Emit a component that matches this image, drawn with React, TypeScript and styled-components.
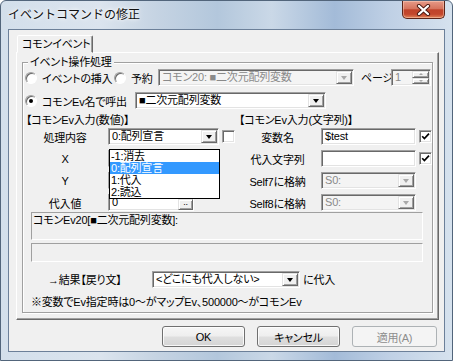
import React from "react"
import styled, { createGlobalStyle, css } from "styled-components"

const GlobalStyle = createGlobalStyle`
  html, body {
    margin: 0;
    padding: 0;
    background: #fff;
  }
  body {
    font-family: "Liberation Sans", "Noto Sans CJK JP", sans-serif;
    font-size: 11px;
    letter-spacing: -0.2px;
    font-feature-settings: "palt";
    color: #000;
  }
  * {
    box-sizing: border-box;
  }
`

const sunken = css`
  border: 1px solid;
  border-color: #a0a0a0 #fff #fff #a0a0a0;
  box-shadow: inset 1px 1px 0 #696969, inset -1px -1px 0 #e3e3e3;
`

const raised = css`
  border: 1px solid;
  border-color: #e3e3e3 #696969 #696969 #e3e3e3;
  box-shadow: inset 1px 1px 0 #fff, inset -1px -1px 0 #a0a0a0;
`

const Window = styled.div`
  width: 453px;
  height: 361px;
  display: flex;
  flex-direction: column;
  border: 1px solid #52657b;
  border-radius: 6px 6px 0 0;
  overflow: hidden;
  background: linear-gradient(90deg, #d3dfeb 0%, #dbe4ee 22%, #c6d4e3 34%, #b3c7dc 48%, #cad8e7 60%, #a3bbd8 74%, #bfd0e5 86%, #d6e2ee 100%);
`

const TitleBar = styled.div`
  flex: 0 0 28px;
  display: flex;
  align-items: flex-start;
`

const Title = styled.div`
  padding-left: 7px;
  line-height: 26px;
  font-family: "Noto Sans CJK JP", sans-serif;
  font-feature-settings: normal;
  letter-spacing: 0;
  font-size: 12px;
  color: #101010;
  text-shadow: 0 0 6px #fff, 0 0 3px #fff;
`

const CloseButton = styled.div`
  margin-left: auto;
  margin-right: 7px;
  width: 43px;
  height: 18px;
  border: 1px solid #5b2419;
  border-top: none;
  border-radius: 0 0 5px 5px;
  background: linear-gradient(#e69a88 0%, #d6745e 45%, #c0432a 52%, #c3472d 78%, #e2845a 100%);
  box-shadow: inset 0 0 0 1px rgba(255, 220, 200, 0.45);
  display: flex;
  align-items: center;
  justify-content: center;
`

const Client = styled.div`
  flex: 0 0 323px;
  margin: 0 7px;
  background: #f0f0f0;
  border: 1px solid #6c8099;
  display: flex;
  flex-direction: column;
  padding: 5px 5px 0 7px;
`

const TabStrip = styled.div`
  height: 17px;
  display: flex;
  padding-left: 1px;
`

const Tab = styled.div`
  position: relative;
  z-index: 1;
  width: 76px;
  height: 18px;
  background: #f0f0f0;
  border: 1px solid;
  border-color: #fff #696969 transparent #fff;
  box-shadow: inset -1px 0 0 #a0a0a0;
  border-radius: 2px 2px 0 0;
  padding-left: 4px;
  line-height: 16px;
  white-space: nowrap;
`

const TabPanel = styled.div`
  height: 268px;
  display: flex;
  flex-direction: column;
  border: 1px solid;
  border-color: #fff #696969 #696969 #fff;
  box-shadow: inset -1px -1px 0 #a0a0a0;
  padding: 9px 5px 6px 5px;
`

const Group = styled.div`
  flex: 1;
  position: relative;
  padding: 6px 4px 0 1px;
  border: 1px solid #a0a0a0;
  box-shadow: 1px 1px 0 #fff, inset 1px 1px 0 #fff;
  display: flex;
  flex-direction: column;
`

const GroupLabel = styled.div`
  position: absolute;
  top: -7px;
  left: 5px;
  padding: 0 2px;
  line-height: 13px;
  background: #f0f0f0;
  white-space: nowrap;
`

const Row = styled.div<{ $top: number }>`
  height: 17px;
  margin-top: ${p => p.$top}px;
  display: flex;
  align-items: center;
  white-space: nowrap;
`

const Option = styled.label<{ $w: number }>`
  flex: none;
  width: ${p => p.$w}px;
  display: flex;
  align-items: center;
  gap: 5px;
  padding-left: 1px;
`

const Radio = styled.span<{ $checked?: boolean }>`
  flex: none;
  position: relative;
  width: 12px;
  height: 12px;
  border-radius: 50%;
  background: #fff;
  border: 1px solid;
  border-color: #a0a0a0 #fff #fff #a0a0a0;
  box-shadow: inset 1px 1px 0 #696969;
  ${p =>
    p.$checked &&
    css`
      &::after {
        content: "";
        position: absolute;
        left: 3px;
        top: 3px;
        width: 4px;
        height: 4px;
        border-radius: 50%;
        background: #000;
      }
    `}
`

const Combo = styled.div<{ $w: number; $disabled?: boolean }>`
  flex: none;
  position: relative;
  width: ${p => p.$w}px;
  height: 17px;
  display: flex;
  padding: 1px;
  ${sunken};
  background: ${p => (p.$disabled ? "#f4f4f4" : "#fff")};
  color: ${p => (p.$disabled ? "#8a8a8a" : "#000")};
`

const ComboText = styled.div`
  flex: 1;
  min-width: 0;
  padding-left: 2px;
  line-height: 13px;
  overflow: hidden;
  white-space: nowrap;
`

const DropButton = styled.div<{ $disabled?: boolean }>`
  flex: none;
  width: 16px;
  height: 13px;
  background: #f0f0f0;
  ${raised};
  display: flex;
  align-items: center;
  justify-content: center;
  &::after {
    content: "";
    border-left: 3.5px solid transparent;
    border-right: 3.5px solid transparent;
    border-top: 4px solid ${p => (p.$disabled ? "#a8a8a8" : "#000")};
  }
`

const Caption = styled.span<{ $w?: number; $pad?: number }>`
  flex: none;
  width: ${p => (p.$w ? `${p.$w}px` : "auto")};
  padding-left: ${p => p.$pad ?? 0}px;
  line-height: 14px;
`

const Spinner = styled.div`
  flex: none;
  width: 40px;
  height: 17px;
  display: flex;
  padding: 1px;
  ${sunken};
  background: #f4f4f4;
  color: #8a8a8a;
`

const SpinButtons = styled.div`
  flex: none;
  width: 17px;
  display: flex;
  flex-direction: column;
`

const SpinButton = styled.div<{ $up?: boolean }>`
  flex: 1;
  background: #f0f0f0;
  ${raised};
  display: flex;
  align-items: center;
  justify-content: center;
  &::after {
    content: "";
    border-left: 2.5px solid transparent;
    border-right: 2.5px solid transparent;
    ${p => (p.$up ? "border-bottom" : "border-top")}: 2px solid #a8a8a8;
  }
`

const SectionRow = styled.div`
  height: 14px;
  margin-top: 4px;
  display: flex;
  padding-left: 2px;
  white-space: nowrap;
`

const SectionTitle = styled.div<{ $w?: number }>`
  flex: none;
  width: ${p => (p.$w ? `${p.$w}px` : "auto")};
  line-height: 14px;
`

const FormArea = styled.div`
  margin-top: 1px;
  display: flex;
  padding-left: 1px;
`

const FormColumn = styled.div<{ $label: number; $control: number; $offset?: number }>`
  display: grid;
  grid-template-columns: ${p => p.$label}px ${p => p.$control}px 13px;
  grid-auto-rows: 17px;
  column-gap: 3px;
  row-gap: 5px;
  margin-left: ${p => p.$offset ?? 0}px;
  white-space: nowrap;
`

const FieldLabel = styled.div`
  grid-column: 1;
  display: flex;
  align-items: center;
  justify-content: center;
`

const Cell = styled.div<{ $col: number }>`
  grid-column: ${p => p.$col};
  position: relative;
  display: flex;
  align-items: center;
`

const TextBox = styled.div<{ $w?: number }>`
  flex: ${p => (p.$w ? "none" : "1")};
  width: ${p => (p.$w ? `${p.$w}px` : "auto")};
  height: 17px;
  padding: 1px 3px;
  line-height: 13px;
  background: #fff;
  ${sunken};
  white-space: nowrap;
  overflow: hidden;
`

const DotsButton = styled.div`
  flex: none;
  width: 15px;
  height: 11px;
  margin-left: -16px;
  margin-top: 3px;
  background: #f0f0f0;
  ${raised};
  font-size: 9px;
  line-height: 4px;
  text-align: center;
  position: relative;
`

const Check = styled.span`
  flex: none;
  width: 13px;
  height: 13px;
  background: #fff;
  ${sunken};
  display: flex;
  align-items: center;
  justify-content: center;
`

const DropList = styled.ul`
  position: absolute;
  left: 0;
  top: 20px;
  z-index: 3;
  width: 111px;
  margin: 0;
  padding: 0;
  list-style: none;
  background: #fff;
  border: 1px solid #000;
`

const DropItem = styled.li<{ $selected?: boolean }>`
  height: 12px;
  line-height: 12px;
  padding-left: 1px;
  overflow: hidden;
  background: ${p => (p.$selected ? "#3399ff" : "transparent")};
  color: ${p => (p.$selected ? "#fff" : "#000")};
`

const InfoBox = styled.div<{ $h: number; $top: number }>`
  height: ${p => p.$h}px;
  margin: ${p => p.$top}px 5px 0 7px;
  border: 1px solid;
  border-color: #a0a0a0 #fff #fff #a0a0a0;
  padding: 1px 0 0 1px;
  line-height: 13px;
  white-space: nowrap;
`

const Note = styled.div`
  margin-top: 8px;
  padding-left: 7px;
  line-height: 13px;
  white-space: nowrap;
`

const ButtonRow = styled.div`
  margin-top: 6px;
  padding-right: 2px;
  display: flex;
  justify-content: flex-end;
  gap: 12px;
`

const PushButton = styled.div<{ $w: number; $disabled?: boolean }>`
  width: ${p => p.$w}px;
  height: 21px;
  border: 1px solid ${p => (p.$disabled ? "#adb2b5" : "#707070")};
  border-radius: 3px;
  background: ${p =>
    p.$disabled ? "#f4f4f4" : "linear-gradient(#f6f6f6 0%, #eeeeee 48%, #dfdfdf 52%, #d4d4d4 100%)"};
  box-shadow: inset 0 0 0 1px ${p => (p.$disabled ? "transparent" : "rgba(255,255,255,0.8)")};
  color: ${p => (p.$disabled ? "#8d8d8d" : "#000")};
  display: flex;
  align-items: center;
  justify-content: center;
`

const CheckMark = () => (
  <svg width="9" height="9" viewBox="0 0 9 9">
    <path d="M1.2 4.2 L3.4 6.6 L8 1.6" fill="none" stroke="#000" strokeWidth="1.7" />
  </svg>
)

const CloseGlyph = () => (
  <svg width="15" height="12" viewBox="0 0 15 12">
    <path d="M3 2 L12 10 M12 2 L3 10" stroke="#4a1a12" strokeWidth="4.2" strokeLinecap="round" />
    <path d="M3 2 L12 10 M12 2 L3 10" stroke="#fff" strokeWidth="2.3" strokeLinecap="round" />
  </svg>
)

const ComboBox = (props: { w: number; value: string; disabled?: boolean; children?: React.ReactNode }) => (
  <Combo $w={props.w} $disabled={props.disabled}>
    <ComboText>{props.value}</ComboText>
    <DropButton $disabled={props.disabled} />
    {props.children}
  </Combo>
)

const listItems = ["-1:消去", "0:配列宣言", "1:代入", "2:読込"]

export default function App() {
  return (
    <>
      <GlobalStyle />
      <Window>
        <TitleBar>
          <Title>イベントコマンドの修正</Title>
          <CloseButton>
            <CloseGlyph />
          </CloseButton>
        </TitleBar>
        <Client>
          <TabStrip>
            <Tab>コモンイベント</Tab>
          </TabStrip>
          <TabPanel>
            <Group>
              <GroupLabel>イベント操作処理</GroupLabel>
              <Row $top={0}>
                <Option $w={89}>
                  <Radio />
                  イベントの挿入
                </Option>
                <Option $w={45}>
                  <Radio />
                  予約
                </Option>
                <ComboBox w={196} value="コモン20: ■二次元配列変数" disabled />
                <Caption $w={37} $pad={7}>
                  ページ
                </Caption>
                <Spinner>
                  <ComboText>1</ComboText>
                  <SpinButtons>
                    <SpinButton $up />
                    <SpinButton />
                  </SpinButtons>
                </Spinner>
              </Row>
              <Row $top={6}>
                <Option $w={111}>
                  <Radio $checked />
                  コモンEv名で呼出
                </Option>
                <ComboBox w={191} value="■二次元配列変数" />
              </Row>
              <SectionRow>
                <SectionTitle $w={213}>【コモンEv入力(数値)】</SectionTitle>
                <SectionTitle>【コモンEv入力(文字列)】</SectionTitle>
              </SectionRow>
              <FormArea>
                <FormColumn $label={80} $control={111}>
                  <FieldLabel>処理内容</FieldLabel>
                  <Cell $col={2}>
                    <ComboBox w={111} value="0:配列宣言">
                      <DropList>
                        {listItems.map(item => (
                          <DropItem key={item} $selected={item === "0:配列宣言"}>
                            {item}
                          </DropItem>
                        ))}
                      </DropList>
                    </ComboBox>
                  </Cell>
                  <Cell $col={3}>
                    <Check />
                  </Cell>
                  <FieldLabel>X</FieldLabel>
                  <Cell $col={2}>
                    <TextBox $w={86} />
                  </Cell>
                  <FieldLabel>Y</FieldLabel>
                  <Cell $col={2}>
                    <TextBox $w={86} />
                  </Cell>
                  <FieldLabel>代入値</FieldLabel>
                  <Cell $col={2}>
                    <TextBox $w={86}>0</TextBox>
                    <DotsButton>..</DotsButton>
                  </Cell>
                </FormColumn>
                <FormColumn $label={81} $control={95} $offset={2}>
                  <FieldLabel>変数名</FieldLabel>
                  <Cell $col={2}>
                    <TextBox>$test</TextBox>
                  </Cell>
                  <Cell $col={3}>
                    <Check>
                      <CheckMark />
                    </Check>
                  </Cell>
                  <FieldLabel>代入文字列</FieldLabel>
                  <Cell $col={2}>
                    <TextBox />
                  </Cell>
                  <Cell $col={3}>
                    <Check>
                      <CheckMark />
                    </Check>
                  </Cell>
                  <FieldLabel>Self7に格納</FieldLabel>
                  <Cell $col={2}>
                    <ComboBox w={95} value="S0:" disabled />
                  </Cell>
                  <FieldLabel>Self8に格納</FieldLabel>
                  <Cell $col={2}>
                    <ComboBox w={95} value="S0:" disabled />
                  </Cell>
                </FormColumn>
              </FormArea>
              <InfoBox $h={28} $top={1}>
                コモンEv20[■二次元配列変数]:
              </InfoBox>
              <InfoBox $h={19} $top={3} />
              <Row $top={9}>
                <Caption $w={128} $pad={24}>
                  →結果【戻り文】
                </Caption>
                <ComboBox w={148} value="<どこにも代入しない>" />
                <Caption $pad={3}>に代入</Caption>
              </Row>
              <Note>※変数でEv指定時は0～がマップEv、500000～がコモンEv</Note>
            </Group>
          </TabPanel>
          <ButtonRow>
            <PushButton $w={83}>OK</PushButton>
            <PushButton $w={83}>キャンセル</PushButton>
            <PushButton $w={85} $disabled>
              適用(A)
            </PushButton>
          </ButtonRow>
        </Client>
      </Window>
    </>
  )
}
